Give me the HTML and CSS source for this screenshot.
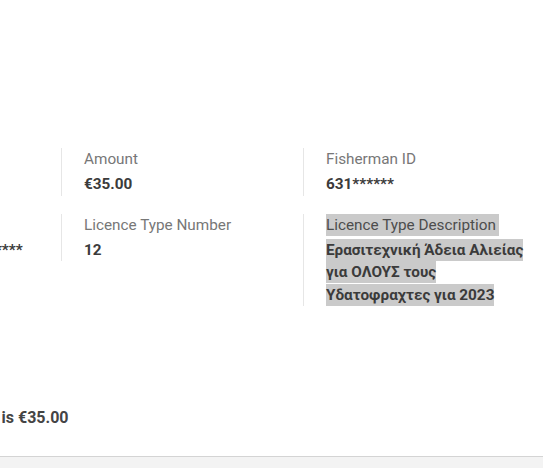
FILE: index.html
```html
<!DOCTYPE html>
<html lang="en">
<head>
<meta charset="utf-8">
<title>Licence details</title>
<link rel="stylesheet" href="styles.css">
</head>
<body>
<main class="page">
  <section class="details">
    <div class="field">
      <div class="label">Name</div>
      <div class="value">Γιώργος Π.</div>
    </div>
    <div class="field">
      <div class="label">Amount</div>
      <div class="value">€35.00</div>
    </div>
    <div class="field">
      <div class="label">Fisherman ID</div>
      <div class="value">631******</div>
    </div>
    <div class="field">
      <div class="label">Licence Number</div>
      <div class="value">GR-ERA-2023-00458*****</div>
    </div>
    <div class="field">
      <div class="label">Licence Type Number</div>
      <div class="value">12</div>
    </div>
    <div class="field">
      <div class="label"><span class="sel sel-label">Licence Type Description</span></div>
      <div class="value"><span class="sel">Ερασιτεχνική Άδεια Αλιείας για ΟΛΟΥΣ τους Υδατοφραχτες για 2023</span></div>
    </div>
  </section>
  <p class="total">The total amount of your licence is €35.00</p>
</main>
<footer class="bar"></footer>
</body>
</html>
```

FILE: styles.css
```css
html, body {
  margin: 0;
  padding: 0;
  background: #ffffff;
  overflow: hidden;
}

body {
  font-family: Roboto, "Noto Sans", "DejaVu Sans", sans-serif;
  font-size: 15.3px;
  color: #3b3b3b;
}

.page {
  padding-top: 148px;
}

.details {
  display: grid;
  grid-template-columns: repeat(3, 242px);
  row-gap: 18px;
  align-items: start;
  margin-left: -181px;
}

.field {
  border-left: 1px solid #e6e6e6;
  padding: 0 10px 0 22px;
}

.label {
  color: #777777;
  line-height: 22px;
  margin-bottom: 3px;
}

.value {
  font-weight: 700;
  color: #3b3b3b;
  line-height: 22.5px;
}

.sel {
  background: #cacaca;
  padding: 2px 0;
}

.sel-label {
  padding-right: 3px;
  color: #4d4d4d;
}

.total {
  margin: 101px 0 27px -235px;
  font-size: 16px;
  font-weight: 700;
  color: #444444;
  line-height: 22px;
}

.bar {
  height: 40px;
  background: #f3f3f3;
  border-top: 1px solid #d4d4d4;
}
```
